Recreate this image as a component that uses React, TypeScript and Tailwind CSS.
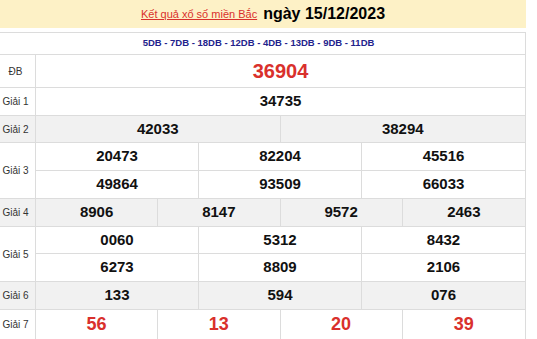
const font = { fontFamily: '"Liberation Sans", Arial, sans-serif' }

type Row = { nums: string[]; h: string }
type Prize = { label: string; rows: Row[]; gray?: boolean; big?: 'db' | 'g7' }

const prizes: Prize[] = [
  { label: 'ĐB', rows: [{ nums: ['36904'], h: 'h-[33px]' }], big: 'db' },
  { label: 'Giải 1', rows: [{ nums: ['34735'], h: 'h-[28px]' }] },
  { label: 'Giải 2', rows: [{ nums: ['42033', '38294'], h: 'h-[27px]' }], gray: true },
  {
    label: 'Giải 3',
    rows: [
      { nums: ['20473', '82204', '45516'], h: 'h-[28px]' },
      { nums: ['49864', '93509', '66033'], h: 'h-[28px]' },
    ],
  },
  { label: 'Giải 4', rows: [{ nums: ['8906', '8147', '9572', '2463'], h: 'h-[28px]' }], gray: true },
  {
    label: 'Giải 5',
    rows: [
      { nums: ['0060', '5312', '8432'], h: 'h-[27px]' },
      { nums: ['6273', '8809', '2106'], h: 'h-[28px]' },
    ],
  },
  { label: 'Giải 6', rows: [{ nums: ['133', '594', '076'], h: 'h-[28px]' }], gray: true },
  { label: 'Giải 7', rows: [{ nums: ['56', '13', '20', '39'], h: 'h-[34px]' }], big: 'g7' },
]

const colsClass: Record<number, string> = {
  1: 'grid-cols-1',
  2: 'grid-cols-2',
  3: 'grid-cols-3',
  4: 'grid-cols-4',
}

function numClass(big?: 'db' | 'g7') {
  if (big === 'db') return 'text-[20px] text-[#d9302c]'
  if (big === 'g7') return 'text-[18px] text-[#d9302c]'
  return 'text-[15px] text-[#111]'
}

export default function App() {
  return (
    <div className="w-[537px] h-[339px] overflow-hidden bg-white" style={font}>
      <div className="w-[526px] h-[28px] bg-[#fdf1c6] flex items-center justify-center">
        <span className="text-[11px] text-[#d9302c] underline mt-[1px]">Kết quả xổ số miền Bắc</span>
        <span className="text-[16px] font-bold text-black ml-[6px]">ngày 15/12/2023</span>
      </div>

      <div className="mt-[4px] w-[526px] border-t border-r border-[#dcdcdc]">
        <div className="h-[22px] border-b border-[#dcdcdc] flex items-center justify-center">
          <span className="text-[9.5px] font-bold text-[#22228c] mr-[8px]">
            5DB - 7DB - 18DB - 12DB - 4DB - 13DB - 9DB - 11DB
          </span>
        </div>

        {prizes.map((p) => (
          <div key={p.label} className={`flex ${p.gray ? 'bg-[#f1f1f1]' : 'bg-white'}`}>
            <div className="w-[36px] shrink-0 border-r border-b border-[#dcdcdc] flex items-center justify-center pr-[4px]">
              <span className={`text-[10px] text-[#333] whitespace-nowrap ${p.big === 'g7' ? 'mb-[4px]' : ''}`}>
                {p.label}
              </span>
            </div>
            <div className="flex-1 flex flex-col">
              {p.rows.map((r, i) => (
                <div key={i} className={`grid ${colsClass[r.nums.length]} ${r.h}`}>
                  {r.nums.map((n, j) => (
                    <div
                      key={j}
                      className={`flex items-center justify-center border-b border-[#dcdcdc] ${
                        j < r.nums.length - 1 ? 'border-r' : ''
                      }`}
                    >
                      <span className={`font-bold ${numClass(p.big)} ${p.big === 'g7' ? 'mb-[4px]' : ''}`}>
                        {n}
                      </span>
                    </div>
                  ))}
                </div>
              ))}
            </div>
          </div>
        ))}
      </div>
    </div>
  )
}
